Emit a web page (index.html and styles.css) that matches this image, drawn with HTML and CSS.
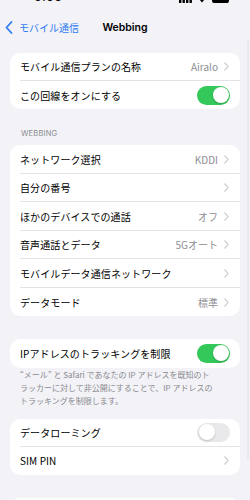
FILE: index.html
```html
<!DOCTYPE html>
<html lang="ja">
<head>
<meta charset="utf-8">
<link rel="stylesheet" href="styles.css">
</head>
<body>
<div class="screen">
  <div class="status">
    <span class="time">9:05</span>
    <span class="status-icons">
      <svg width="13" height="10" viewBox="0 0 13 10"><rect x="0" y="6" width="2.4" height="4" rx=".6"/><rect x="3.5" y="4" width="2.4" height="6" rx=".6"/><rect x="7" y="2" width="2.4" height="8" rx=".6"/><rect x="10.5" y="0" width="2.4" height="10" rx=".6"/></svg>
      <svg width="12" height="10" viewBox="0 0 12 10"><path d="M6 9.5 4 7.3a3 3 0 0 1 4 0Z"/><path d="M2.6 5.8a5 5 0 0 1 6.8 0l-1 1.1a3.6 3.6 0 0 0-4.8 0Z"/><path d="M1 4.1a7.4 7.4 0 0 1 10 0l-1 1.1a6 6 0 0 0-8 0Z"/></svg>
      <svg width="20" height="10" viewBox="0 0 20 10"><rect x="0" y="0" width="17" height="10" rx="2.6" fill="#000"/><rect x="18" y="3" width="1.6" height="4" rx=".8"/></svg>
    </span>
  </div>

  <div class="nav">
    <div class="back">
      <svg class="back-chev" width="8" height="13" viewBox="0 0 8 13"><path d="M6.5 1 1.5 6.5l5 5.5" fill="none" stroke="#2f7cf6" stroke-width="1.8" stroke-linecap="round" stroke-linejoin="round"/></svg>
      <span>モバイル通信</span>
    </div>
    <div class="title">Webbing</div>
  </div>

  <div class="content">
    <div class="card">
      <div class="row">
        <span class="label">モバイル通信プランの名称</span>
        <span class="value">Airalo</span>
        <svg class="chev" width="5" height="9" viewBox="0 0 5 9"><path d="M.8.8 4.2 4.5.8 8.2" fill="none" stroke="#c4c4c7" stroke-width="1.1" stroke-linecap="round" stroke-linejoin="round"/></svg>
      </div>
      <div class="row">
        <span class="label">この回線をオンにする</span>
        <span class="toggle on"><span class="knob"></span></span>
      </div>
    </div>

    <div class="section-header">WEBBING</div>
    <div class="card">
      <div class="row tall">
        <span class="label">ネットワーク選択</span>
        <span class="value">KDDI</span>
        <svg class="chev" width="5" height="9" viewBox="0 0 5 9"><path d="M.8.8 4.2 4.5.8 8.2" fill="none" stroke="#c4c4c7" stroke-width="1.1" stroke-linecap="round" stroke-linejoin="round"/></svg>
      </div>
      <div class="row tall">
        <span class="label">自分の番号</span>
        <svg class="chev" width="5" height="9" viewBox="0 0 5 9"><path d="M.8.8 4.2 4.5.8 8.2" fill="none" stroke="#c4c4c7" stroke-width="1.1" stroke-linecap="round" stroke-linejoin="round"/></svg>
      </div>
      <div class="row tall">
        <span class="label">ほかのデバイスでの通話</span>
        <span class="value">オフ</span>
        <svg class="chev" width="5" height="9" viewBox="0 0 5 9"><path d="M.8.8 4.2 4.5.8 8.2" fill="none" stroke="#c4c4c7" stroke-width="1.1" stroke-linecap="round" stroke-linejoin="round"/></svg>
      </div>
      <div class="row tall">
        <span class="label">音声通話とデータ</span>
        <span class="value">5Gオート</span>
        <svg class="chev" width="5" height="9" viewBox="0 0 5 9"><path d="M.8.8 4.2 4.5.8 8.2" fill="none" stroke="#c4c4c7" stroke-width="1.1" stroke-linecap="round" stroke-linejoin="round"/></svg>
      </div>
      <div class="row tall">
        <span class="label">モバイルデータ通信ネットワーク</span>
        <svg class="chev" width="5" height="9" viewBox="0 0 5 9"><path d="M.8.8 4.2 4.5.8 8.2" fill="none" stroke="#c4c4c7" stroke-width="1.1" stroke-linecap="round" stroke-linejoin="round"/></svg>
      </div>
      <div class="row tall">
        <span class="label">データモード</span>
        <span class="value">標準</span>
        <svg class="chev" width="5" height="9" viewBox="0 0 5 9"><path d="M.8.8 4.2 4.5.8 8.2" fill="none" stroke="#c4c4c7" stroke-width="1.1" stroke-linecap="round" stroke-linejoin="round"/></svg>
      </div>
    </div>

    <div class="card gap-top">
      <div class="row">
        <span class="label">IPアドレスのトラッキングを制限</span>
        <span class="toggle on"><span class="knob"></span></span>
      </div>
    </div>
    <div class="footer">“メール” と Safari であなたの IP アドレスを既知のト<br>ラッカーに対して非公開にすることで、IP アドレスの<br>トラッキングを制限します。</div>

    <div class="card gap-small">
      <div class="row">
        <span class="label">データローミング</span>
        <span class="toggle off"><span class="knob"></span></span>
      </div>
      <div class="row">
        <span class="label">SIM PIN</span>
        <svg class="chev" width="5" height="9" viewBox="0 0 5 9"><path d="M.8.8 4.2 4.5.8 8.2" fill="none" stroke="#c4c4c7" stroke-width="1.1" stroke-linecap="round" stroke-linejoin="round"/></svg>
      </div>
    </div>

    <div class="card gap-top">
      <div class="row"><span class="label">&nbsp;</span></div>
    </div>
  </div>
  <div class="scroll-indicator"></div>
</div>
</body>
</html>
```

FILE: styles.css
```css
* { box-sizing: border-box; }
html, body {
  margin: 0;
  padding: 0;
  background: #f2f2f7;
}
body {
  font-family: Inter, "Noto Sans CJK JP", sans-serif;
  color: #000;
  width: 250px;
  height: 500px;
  overflow: hidden;
}
.screen {
  position: relative;
  width: 250px;
  height: 500px;
  overflow: hidden;
}
.status {
  height: 4px;
  overflow: hidden;
  display: flex;
  justify-content: space-between;
  padding: 0 18px 0 34px;
}
.time {
  font-size: 12px;
  font-weight: 600;
  line-height: 12px;
  margin-top: -9px;
  letter-spacing: 0.3px;
}
.status-icons {
  display: flex;
  gap: 4px;
  margin-top: -7px;
  align-items: flex-start;
}
.status-icons svg { fill: #000; }
.nav {
  height: 46px;
  display: flex;
  align-items: center;
  position: relative;
}
.back {
  display: flex;
  align-items: center;
  gap: 6px;
  padding-left: 5px;
  color: #2f7cf6;
  font-size: 10px;
  font-family: "Noto Sans CJK JP", sans-serif;
}
.back-chev { margin-top: 0; }
.title {
  position: absolute;
  left: 0;
  right: 0;
  text-align: center;
  font-size: 10.5px;
  font-weight: 600;
  pointer-events: none;
}
.content {
  padding: 3px 10px 0;
}
.card {
  background: #fff;
  border-radius: 10px;
  overflow: hidden;
}
.row {
  height: 28.2px;
  display: flex;
  align-items: center;
  margin-left: 10px;
  padding-right: 11px;
  border-bottom: 0.8px solid #e3e3e6;
  font-size: 10px;
  font-family: "Noto Sans CJK JP", sans-serif;
}
.row.tall { height: 28.5px; }
.row:last-child { border-bottom: none; }
.label {
  flex: 1;
  white-space: nowrap;
  letter-spacing: 0.1px;
}
.value {
  color: #8e8e93;
  margin-right: 6px;
}
.chev { flex: none; }
.toggle {
  flex: none;
  width: 33px;
  height: 19px;
  border-radius: 10px;
  position: relative;
  margin-right: -1px;
}
.toggle.on { background: #34c759; }
.toggle.off { background: #e9e9eb; }
.knob {
  position: absolute;
  top: 1.5px;
  width: 16px;
  height: 16px;
  border-radius: 50%;
  background: #fff;
  box-shadow: 0 1px 2px rgba(0,0,0,0.18);
}
.toggle.on .knob { right: 1.5px; }
.toggle.off .knob { left: 1.5px; }
.section-header {
  padding: 19px 11px 6px;
  font-size: 7.5px;
  line-height: 11px;
  color: #8a8a8e;
  letter-spacing: 0.2px;
}
.gap-top { margin-top: 23px; }
.gap-small { margin-top: 12px; }
.footer {
  padding: 0 10px;
  font-size: 8px;
  line-height: 13px;
  color: #8a8a8e;
  font-family: "Noto Sans CJK JP", sans-serif;
  white-space: nowrap;
}
.scroll-indicator {
  position: absolute;
  right: 1px;
  top: 40px;
  width: 2.5px;
  height: 420px;
  border-radius: 2px;
  background: rgba(0,0,0,0.04);
}
```
